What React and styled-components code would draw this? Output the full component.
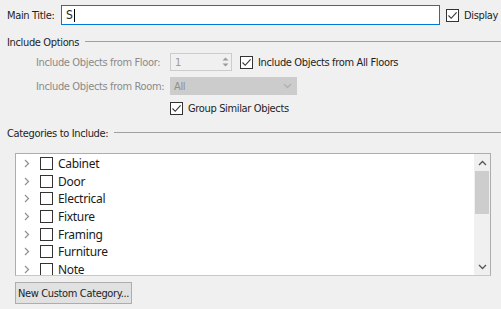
import React from "react";
import styled, { createGlobalStyle } from "styled-components";

const GlobalStyle = createGlobalStyle`
  html, body {
    margin: 0;
    padding: 0;
    background: #f0f0f0;
  }
  body {
    font-family: "DejaVu Sans Condensed", "DejaVu Sans", sans-serif;
    font-size: 11px;
    letter-spacing: -0.35px;
    color: #1e1e1e;
  }
`;

const SPage = styled.div`
  width: 501px;
  height: 309px;
  box-sizing: border-box;
  padding: 5px 0 0 7px;
  overflow: hidden;
`;

const STitleRow = styled.div`
  display: flex;
  align-items: center;
  height: 20px;
`;

const SLabel = styled.span`
  color: ${(p) => (p.disabled ? "#8a8a8a" : "#1e1e1e")};
  white-space: nowrap;
  ${(p) => (p.$w ? `width: ${p.$w}px;` : "")}
`;

const STitleInput = styled.div`
  width: 379px;
  height: 20px;
  box-sizing: border-box;
  border: 1px solid #0078d7;
  background: #fff;
  display: flex;
  align-items: center;
  padding-left: 4px;
  font-size: 12px;
`;

const SCaret = styled.span`
  display: inline-block;
  width: 1px;
  height: 13px;
  background: #000;
  margin-left: 1px;
`;

const SCheckRow = styled.label`
  display: flex;
  align-items: center;
  gap: 5px;
  margin-left: ${(p) => p.$ml || 0}px;
`;

const SBox = styled.span`
  width: 13px;
  height: 13px;
  box-sizing: border-box;
  border: 1px solid #333;
  background: #fff;
  display: flex;
  align-items: center;
  justify-content: center;
  flex-shrink: 0;
`;

const SSection = styled.div`
  display: flex;
  align-items: center;
  gap: 6px;
  margin-top: ${(p) => p.$mt}px;
  height: 14px;
`;

const SRule = styled.div`
  flex: 1;
  height: 1px;
  background: #a0a0a0;
  margin-top: -2px;
`;

const SOptions = styled.div`
  display: grid;
  grid-template-columns: 134px auto;
  grid-template-rows: 24px 24px 20px;
  align-items: center;
  padding-left: 29px;
  margin-top: 1px;
`;

const SSpin = styled.div`
  width: 62px;
  height: 18px;
  box-sizing: border-box;
  border: 1px solid #cccccc;
  background: #f0f0f0;
  display: flex;
  align-items: center;
  justify-content: space-between;
  padding: 0 2px 0 4px;
  color: #9a9a9a;
`;

const SSelect = styled.div`
  width: 127px;
  height: 18px;
  box-sizing: border-box;
  background: #cccccc;
  display: flex;
  align-items: center;
  justify-content: space-between;
  padding: 0 5px 0 4px;
  color: #8f8f8f;
`;

const SControlRow = styled.div`
  display: flex;
  align-items: center;
`;

const SListBox = styled.div`
  width: 476px;
  height: 123px;
  box-sizing: border-box;
  margin: 13px 0 0 8px;
  border: 1px solid #adadad;
  border-bottom-color: #c8c8c8;
  background: #fff;
  display: flex;
`;

const SList = styled.div`
  flex: 1;
  padding-top: 1px;
  overflow: hidden;
`;

const SItem = styled.div`
  display: flex;
  align-items: center;
  height: 17.6px;
  padding-left: 8px;
  font-family: "Noto Sans", sans-serif;
  font-size: 12px;
  letter-spacing: -0.3px;
  color: #1a1a1a;
`;

const SChevron = styled.span`
  width: 8px;
  display: flex;
  margin-right: 8px;
`;

const SItemText = styled.span`
  margin-left: 5px;
`;

const SScrollbar = styled.div`
  width: 16px;
  background: #f0f0f0;
  display: flex;
  flex-direction: column;
  align-items: stretch;
`;

const SScrollBtn = styled.div`
  height: 17px;
  display: flex;
  align-items: center;
  justify-content: center;
`;

const SThumb = styled.div`
  height: 43px;
  margin: 0 1px;
  background: #cdcdcd;
`;

const SScrollTrack = styled.div`
  flex: 1;
`;

const SButton = styled.div`
  width: 117px;
  height: 22px;
  box-sizing: border-box;
  margin: 6px 0 0 8px;
  border: 1px solid #adadad;
  background: #e1e1e1;
  display: flex;
  align-items: center;
  justify-content: center;
  white-space: nowrap;
`;

const Check = () => (
  <svg width="11" height="11" viewBox="0 0 11 11">
    <path d="M1.5 5.5 L4.2 8.3 L9.6 2.4" fill="none" stroke="#333" strokeWidth="1.1" />
  </svg>
);

const CheckBox = ({ checked }) => <SBox>{checked && <Check />}</SBox>;

const Chevron = ({ up, color = "#555" }) => (
  <svg width="9" height="6" viewBox="0 0 9 6">
    <path
      d={up ? "M1 5 L4.5 1.5 L8 5" : "M1 1 L4.5 4.5 L8 1"}
      fill="none"
      stroke={color}
      strokeWidth="1.3"
    />
  </svg>
);

const SpinArrows = () => (
  <svg width="7" height="12" viewBox="0 0 7 12">
    <path d="M0.5 4.5 L3.5 1.5 L6.5 4.5 Z" fill="#9a9a9a" />
    <path d="M0.5 7.5 L3.5 10.5 L6.5 7.5 Z" fill="#9a9a9a" />
  </svg>
);

const Expander = () => (
  <svg width="6" height="9" viewBox="0 0 6 9">
    <path d="M1 1 L4.5 4.5 L1 8" fill="none" stroke="#909090" strokeWidth="1.2" />
  </svg>
);

const categories = ["Cabinet", "Door", "Electrical", "Fixture", "Framing", "Furniture", "Note"];

const App = () => {
  return (
    <>
      <GlobalStyle />
      <SPage>
        <STitleRow>
          <SLabel $w={54}>Main Title:</SLabel>
          <STitleInput>
            S<SCaret />
          </STitleInput>
          <SCheckRow $ml={6}>
            <CheckBox checked />
            <SLabel>Display</SLabel>
          </SCheckRow>
        </STitleRow>

        <SSection $mt={10}>
          <SLabel>Include Options</SLabel>
          <SRule />
        </SSection>

        <SOptions>
          <SLabel disabled>Include Objects from Floor:</SLabel>
          <SControlRow>
            <SSpin>
              <span>1</span>
              <SpinArrows />
            </SSpin>
            <SCheckRow $ml={8}>
              <CheckBox checked />
              <SLabel>Include Objects from All Floors</SLabel>
            </SCheckRow>
          </SControlRow>
          <SLabel disabled>Include Objects from Room:</SLabel>
          <SSelect>
            <span>All</span>
            <Chevron color="#b0b0b0" />
          </SSelect>
          <span />
          <SCheckRow>
            <CheckBox checked />
            <SLabel>Group Similar Objects</SLabel>
          </SCheckRow>
        </SOptions>

        <SSection $mt={8}>
          <SLabel>Categories to Include:</SLabel>
          <SRule />
        </SSection>

        <SListBox>
          <SList>
            {categories.map((c) => (
              <SItem key={c}>
                <SChevron>
                  <Expander />
                </SChevron>
                <CheckBox />
                <SItemText>{c}</SItemText>
              </SItem>
            ))}
          </SList>
          <SScrollbar>
            <SScrollBtn>
              <Chevron up />
            </SScrollBtn>
            <SThumb />
            <SScrollTrack />
            <SScrollBtn>
              <Chevron />
            </SScrollBtn>
          </SScrollbar>
        </SListBox>

        <SButton>New Custom Category...</SButton>
      </SPage>
    </>
  );
};

export default App;
